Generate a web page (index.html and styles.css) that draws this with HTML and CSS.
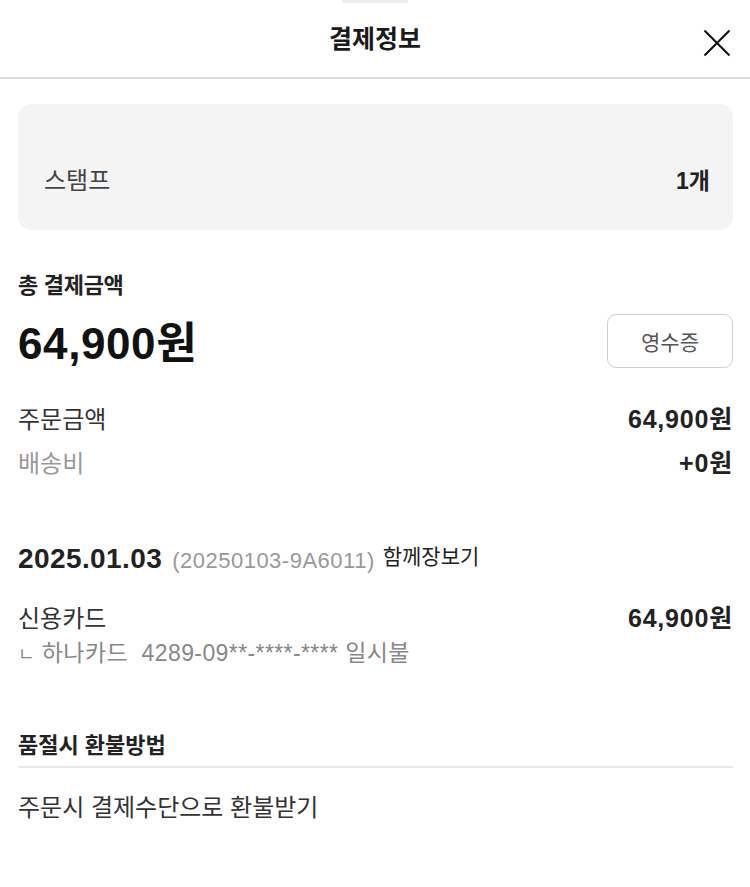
FILE: index.html
```html
<!DOCTYPE html>
<html lang="ko">
<head>
<meta charset="utf-8">
<link rel="stylesheet" href="styles.css">
</head>
<body>
<div class="sheet">
  <div class="grabber"></div>
  <header class="header">
    <h1 class="title">결제정보</h1>
    <button class="close" aria-label="닫기">
      <svg width="28" height="28" viewBox="0 0 28 28"><path d="M1.5 1.5 L26.5 26.5 M26.5 1.5 L1.5 26.5" stroke="#111" stroke-width="2.1" fill="none"/></svg>
    </button>
  </header>
  <main class="content">
    <section class="stamp-box">
      <span class="stamp-label">스탬프</span>
      <span class="stamp-value">1개</span>
    </section>

    <section class="total">
      <div class="total-label">총 결제금액</div>
      <div class="total-row">
        <div class="total-amount">64,900원</div>
        <button class="receipt">영수증</button>
      </div>
      <div class="line-row first">
        <span class="line-label">주문금액</span>
        <span class="line-value">64,900원</span>
      </div>
      <div class="line-row">
        <span class="line-label muted">배송비</span>
        <span class="line-value">+0원</span>
      </div>
    </section>

    <section class="order">
      <div class="order-head">
        <span class="order-date">2025.01.03</span>
        <span class="order-no">(20250103-9A6011)</span>
        <span class="order-type">함께장보기</span>
      </div>
      <div class="line-row">
        <span class="line-label">신용카드</span>
        <span class="line-value">64,900원</span>
      </div>
      <div class="card-info"><span class="card-mark">ㄴ</span> 하나카드&nbsp; 4289-09**-****-**** 일시불</div>
    </section>

    <section class="refund">
      <div class="refund-title">품절시 환불방법</div>
      <div class="refund-text">주문시 결제수단으로 환불받기</div>
    </section>
  </main>
</div>
</body>
</html>
```
FILE: styles.css
```css
* { box-sizing: border-box; }
html, body { margin: 0; padding: 0; background: #fff; }
body {
  font-family: "Liberation Sans", "Noto Sans CJK KR", sans-serif;
  color: #111;
}
.sheet { width: 750px; }
.grabber {
  width: 66px; height: 3px; background: #ececec;
  margin: 0 auto; border-radius: 0 0 2px 2px;
}
.header {
  height: 76px;
  display: flex; align-items: center; justify-content: center;
  position: relative;
  border-bottom: 2px solid #d8dbe0;
}
.title {
  margin: 0; font-size: 25px; line-height: 30px; font-weight: 700; letter-spacing: 0;
  color: #1a1a1a;
  transform: translateY(-1px);
}
.close {
  position: absolute; right: 19px; top: 26px;
  border: 0; background: none; padding: 0; width: 28px; height: 28px;
  display: flex;
}
.content { padding: 25px 17px 0 18px; }
.stamp-box {
  background: #f4f4f4; border-radius: 13px;
  height: 126px;
  display: flex; justify-content: space-between; align-items: flex-end;
  padding: 0 23px 34px 26px;
}
.stamp-label { font-size: 24px; line-height: 30px; color: #444; }
.stamp-value { font-size: 23px; line-height: 30px; font-weight: 700; color: #222; }

.total { padding-top: 41px; }
.total-label { font-size: 22px; line-height: 30px; font-weight: 700; color: #222; letter-spacing: -0.3px; }
.total-row {
  display: flex; justify-content: space-between; align-items: center;
  margin-top: 12px; height: 56px;
}
.total-amount {
  font-size: 44px; line-height: 50px; font-weight: 700; letter-spacing: 0.6px;
  position: relative; top: 3px; color: #111;
}
.receipt {
  width: 126px; height: 54px;
  border: 1.5px solid #d0d0d0; border-radius: 9px; background: #fff;
  font-family: inherit; font-size: 21px; color: #555;
}
.line-row {
  display: flex; justify-content: space-between; align-items: center;
  height: 44px;
}
.line-row.first { margin-top: 26px; }
.line-label { font-size: 24px; color: #333; }
.line-label.muted { color: #999; }
.line-value { font-size: 25px; font-weight: 700; color: #222; letter-spacing: 0.8px; }

.order { padding-top: 58px; }
.order-head { display: flex; align-items: baseline; gap: 10px; height: 36px; margin-bottom: 17px; line-height: 36px; }
.order-date { font-size: 28px; font-weight: 700; color: #222; letter-spacing: 0.4px; }
.order-no { font-size: 22px; color: #999; letter-spacing: 0.5px; }
.order-type { font-size: 21px; color: #222; position: relative; top: -4px; margin-left: -2px; }
.card-info { font-size: 23px; line-height: 30px; color: #888; letter-spacing: 0.4px; }
.card-mark { font-size: 18px; }

.refund { padding-top: 61px; }
.refund-title {
  font-size: 22px; line-height: 30px; font-weight: 700; color: #222;
  padding-bottom: 5px; border-bottom: 2px solid #e8e8e8;
}
.refund-text { font-size: 24px; line-height: 30px; color: #333; margin-top: 25px; }
```
